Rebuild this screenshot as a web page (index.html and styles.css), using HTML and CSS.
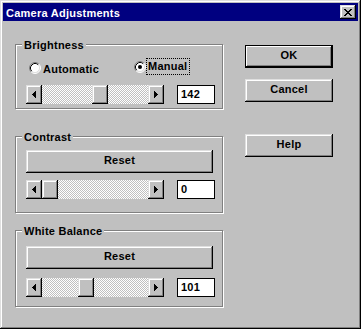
FILE: index.html
```html
<!DOCTYPE html>
<html>
<head>
<meta charset="utf-8">
<link rel="stylesheet" href="styles.css">
</head>
<body>
<div class="window">
  <div class="titlebar">
    <span class="title">Camera Adjustments</span>
    <div class="close raised"><svg width="8" height="7" viewBox="0 0 8 7"><path d="M0 0h2v1H0zM6 0h2v1H6zM1 1h2v1H1zM5 1h2v1H5zM2 2h4v1H2zM3 3h2v1H3zM2 4h4v1H2zM1 5h2v1H1zM5 5h2v1H5zM0 6h2v1H0zM6 6h2v1H6z" fill="#000"/></svg></div>
  </div>
  <div class="body">
    <div class="left">
      <div class="group g-bright">
        <span class="glabel">Brightness</span>
        <div class="radios">
          <div class="radio auto">
            <svg class="rb" width="12" height="12" viewBox="0 0 12 12"><circle cx="6" cy="6" r="5" fill="#fff"/><path d="M2.11 9.89A5.5 5.5 0 0 1 9.89 2.11" fill="none" stroke="#808080"/><path d="M9.89 2.11A5.5 5.5 0 0 1 2.11 9.89" fill="none" stroke="#fff"/><path d="M2.82 9.18A4.5 4.5 0 0 1 9.18 2.82" fill="none" stroke="#000"/><path d="M9.18 2.82A4.5 4.5 0 0 1 2.82 9.18" fill="none" stroke="#dfdfdf"/></svg>
            <span class="rtext">Automatic</span>
          </div>
          <div class="radio manual">
            <svg class="rb" width="12" height="12" viewBox="0 0 12 12"><circle cx="6" cy="6" r="5" fill="#fff"/><path d="M2.11 9.89A5.5 5.5 0 0 1 9.89 2.11" fill="none" stroke="#808080"/><path d="M9.89 2.11A5.5 5.5 0 0 1 2.11 9.89" fill="none" stroke="#fff"/><path d="M2.82 9.18A4.5 4.5 0 0 1 9.18 2.82" fill="none" stroke="#000"/><path d="M9.18 2.82A4.5 4.5 0 0 1 2.82 9.18" fill="none" stroke="#dfdfdf"/><circle cx="6" cy="6" r="2" fill="#000"/></svg>
            <span class="rtext focus">Manual</span>
          </div>
        </div>
        <div class="slider-row">
          <div class="scrollbar">
            <div class="sb-btn raised"><svg width="4" height="7" viewBox="0 0 4 7"><path d="M3 0h1v7H3zM2 1h1v5H2zM1 2h1v3H1zM0 3h1v1H0z" fill="#000"/></svg></div>
            <div class="track"><div class="thumb raised" style="margin-left:50px"></div></div>
            <div class="sb-btn raised"><svg width="4" height="7" viewBox="0 0 4 7"><path d="M0 0h1v7H0zM1 1h1v5H1zM2 2h1v3H2zM3 3h1v1H3z" fill="#000"/></svg></div>
          </div>
          <div class="edit">142</div>
        </div>
      </div>

      <div class="group g-contrast">
        <span class="glabel">Contrast</span>
        <div class="btn reset raised">Reset</div>
        <div class="slider-row">
          <div class="scrollbar">
            <div class="sb-btn raised"><svg width="4" height="7" viewBox="0 0 4 7"><path d="M3 0h1v7H3zM2 1h1v5H2zM1 2h1v3H1zM0 3h1v1H0z" fill="#000"/></svg></div>
            <div class="track"><div class="thumb raised" style="margin-left:0px"></div></div>
            <div class="sb-btn raised"><svg width="4" height="7" viewBox="0 0 4 7"><path d="M0 0h1v7H0zM1 1h1v5H1zM2 2h1v3H2zM3 3h1v1H3z" fill="#000"/></svg></div>
          </div>
          <div class="edit">0</div>
        </div>
      </div>

      <div class="group g-wb">
        <span class="glabel">White Balance</span>
        <div class="btn reset raised">Reset</div>
        <div class="slider-row">
          <div class="scrollbar">
            <div class="sb-btn raised"><svg width="4" height="7" viewBox="0 0 4 7"><path d="M3 0h1v7H3zM2 1h1v5H2zM1 2h1v3H1zM0 3h1v1H0z" fill="#000"/></svg></div>
            <div class="track"><div class="thumb raised" style="margin-left:36px"></div></div>
            <div class="sb-btn raised"><svg width="4" height="7" viewBox="0 0 4 7"><path d="M0 0h1v7H0zM1 1h1v5H1zM2 2h1v3H2zM3 3h1v1H3z" fill="#000"/></svg></div>
          </div>
          <div class="edit">101</div>
        </div>
      </div>
    </div>

    <div class="right">
      <div class="btn default">OK</div>
      <div class="btn raised cancel">Cancel</div>
      <div class="btn raised help">Help</div>
    </div>
  </div>
</div>
</body>
</html>
```

FILE: styles.css
```css
html, body {
  margin: 0;
  padding: 0;
  background: #c0c0c0;
}

body {
  font-family: "Liberation Sans", Arial, sans-serif;
  font-size: 11px;
  font-weight: bold;
  letter-spacing: 0.25px;
  color: #000;
}

.window {
  width: 361px;
  height: 329px;
  box-sizing: border-box;
  padding: 3px;
  background: #c0c0c0;
  box-shadow: inset -1px -1px #000, inset 1px 1px #dfdfdf, inset -2px -2px #808080, inset 2px 2px #fff;
  display: flex;
  flex-direction: column;
}

.titlebar {
  height: 18px;
  background: #000080;
  display: flex;
  align-items: flex-start;
  justify-content: space-between;
  padding: 0 2px 0 3px;
  flex: none;
}

.title {
  color: #fff;
  line-height: 13px;
  margin-top: 4px;
}

.raised {
  background: #c0c0c0;
  box-shadow: inset -1px -1px #000, inset 1px 1px #dfdfdf, inset -2px -2px #808080, inset 2px 2px #fff;
}

.close {
  width: 16px;
  height: 14px;
  margin-top: 2px;
  display: flex;
  align-items: center;
  justify-content: center;
  box-sizing: border-box;
}

.body {
  display: flex;
  padding: 23px 0 0 12px;
}

.left {
  width: 208px;
  flex: none;
}

.group {
  position: relative;
  box-sizing: border-box;
  border: 1px solid #808080;
  box-shadow: inset 1px 1px #fff, 1px 1px #fff;
  padding: 0 7px 0 10px;
}

.glabel {
  position: absolute;
  top: -6px;
  left: 6px;
  padding: 0 2px;
  line-height: 13px;
  background: #c0c0c0;
  white-space: nowrap;
}

.g-bright {
  height: 65px;
  padding-top: 13px;
}

.g-contrast {
  height: 77px;
  margin-top: 27px;
  padding-top: 13px;
}

.g-wb {
  height: 77px;
  margin-top: 17px;
  padding-top: 15px;
}

.radios {
  display: flex;
  align-items: flex-start;
  height: 20px;
  padding-left: 3px;
}

.radio {
  display: flex;
  align-items: flex-start;
}

.radio.auto {
  width: 105px;
  margin-top: 3px;
}

.radio.auto .rb {
  margin-top: 1px;
}

.radio.manual .rb {
  margin-top: 3px;
}

.rtext {
  line-height: 15px;
  border: 1px solid transparent;
  padding: 0 2px 0 1px;
}

.rtext.focus {
  border: 1px dotted #000;
}

.slider-row {
  display: flex;
  justify-content: space-between;
  height: 19px;
}

.g-bright .slider-row { margin-top: 7px; }
.g-contrast .slider-row { margin-top: 7px; }
.g-wb .slider-row { margin-top: 9px; }

.scrollbar {
  width: 138px;
  height: 19px;
  display: flex;
}

.sb-btn {
  width: 16px;
  height: 19px;
  flex: none;
  display: flex;
  align-items: center;
  justify-content: center;
}

.track {
  flex: 1;
  display: flex;
  background-image: conic-gradient(#fff 25%, #c0c0c0 0 50%, #fff 0 75%, #c0c0c0 0);
  background-size: 2px 2px;
}

.thumb {
  width: 16px;
  height: 19px;
  flex: none;
}

.edit {
  width: 38px;
  height: 19px;
  box-sizing: border-box;
  border: 1px solid #000;
  background: #fff;
  padding-left: 3px;
  line-height: 17px;
}

.btn {
  box-sizing: border-box;
  height: 23px;
  line-height: 21px;
  padding-bottom: 2px;
  text-align: center;
}

.reset {
  width: 187px;
}

.right {
  width: 88px;
  margin-left: 22px;
  padding-top: 1px;
  display: flex;
  flex-direction: column;
}

.default {
  background: #c0c0c0;
  border: 1px solid #000;
  box-shadow: inset -1px -1px #000, inset 1px 1px #fff, inset -2px -2px #808080;
  line-height: 19px;
}

.cancel {
  margin-top: 11px;
}

.help {
  margin-top: 32px;
}
```
